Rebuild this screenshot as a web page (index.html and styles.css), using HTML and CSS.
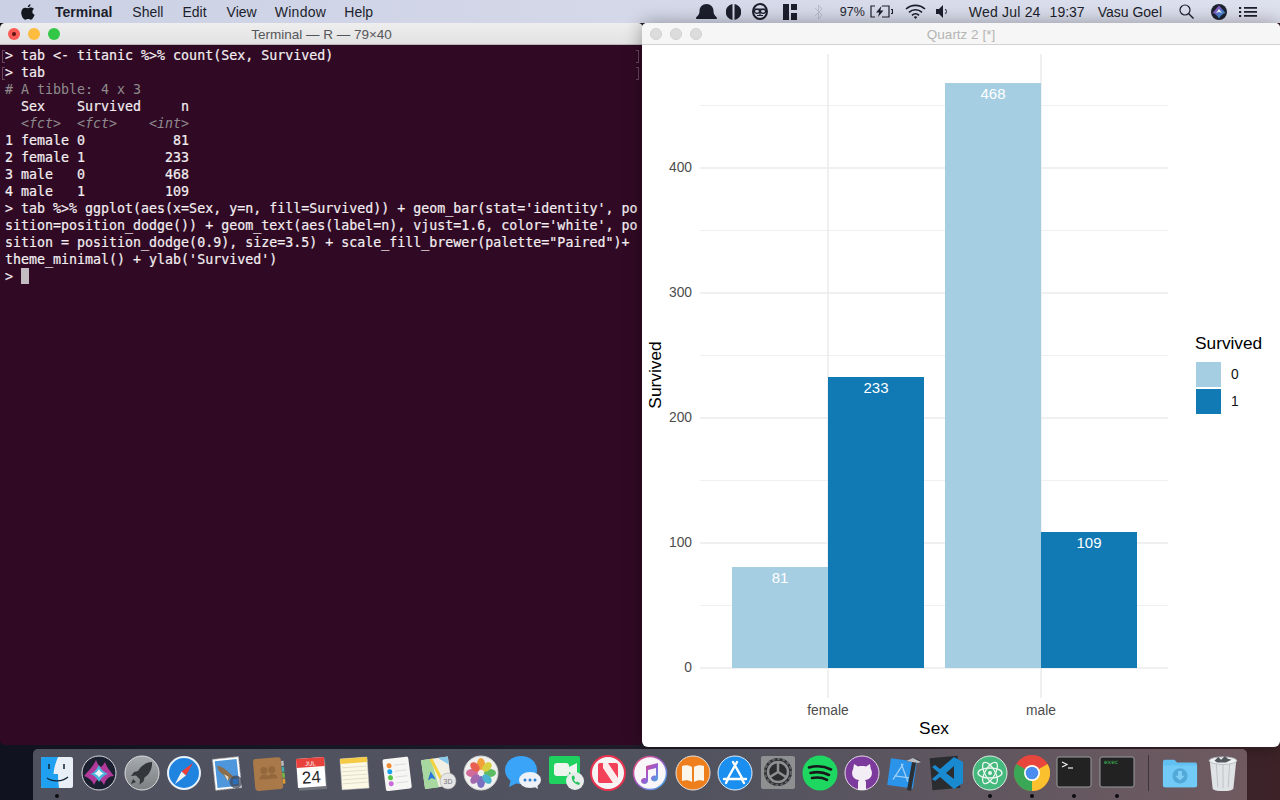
FILE: index.html
```html
<!DOCTYPE html>
<html lang="en">
<head>
    <meta charset="UTF-8">
    <title>Terminal - Quartz 2</title>
    <link rel="stylesheet" href="styles.css">
</head>
<body>
<div class="menubar">
    <svg class="apple" viewBox="0 0 14 16"><path d="M9.6 0.2c.1 1.2-1.1 3-2.8 3C6.600 1.800 8 .4 9.600.2zM7 4.200c.8 0 1.600-.7 3-.7 1.100 0 2.200.5 3 1.500-2.400 1.400-2 4.800.6 5.800-.6 1.700-2 4.900-3.700 4.900-1 0-1.400-.7-2.700-.7s-1.800.7-2.700.7C2.400 15.900.2 11.800.2 8.700c0-3.100 2-5 4-5 1.200 0 2.100.5 2.800.5z" fill="#15171f"/></svg>
    <span class="menu-name">Terminal</span>
    <span class="menu-item m-shell">Shell</span>
    <span class="menu-item m-edit">Edit</span>
    <span class="menu-item m-view">View</span>
    <span class="menu-item m-window">Window</span>
    <span class="menu-item m-help">Help</span>
    <div class="status">
        <svg class="st-bell" viewBox="0 0 21 15"><path d="M0 14c0-1.500 3.500-2 3.500-7 0-4 3-7 7-7s7 3 7 7c0 5 3.500 5.500 3.500 7 0 .6-.5 1-1 1H1c-.5 0-1-.4-1-1z" fill="#1c1f2c"/></svg>
        <svg class="st-half" viewBox="0 0 15 16"><path d="M6.500 0.100A8 8 0 0 0 6.500 15.900zM8.500 0.100A8 8 0 0 1 8.500 15.900z" fill="#1c1f2c"/></svg>
        <svg class="st-mask" viewBox="0 0 16 17"><ellipse cx="8" cy="8.500" rx="7" ry="7.500" fill="none" stroke="#1c1f2c" stroke-width="2"/><path d="M2 5.500h12v1.200H2z" fill="#1c1f2c"/><ellipse cx="5" cy="8.300" rx="2.600" ry="2" fill="none" stroke="#1c1f2c" stroke-width="1.300"/><ellipse cx="11" cy="8.300" rx="2.600" ry="2" fill="none" stroke="#1c1f2c" stroke-width="1.300"/><path d="M8 6v7M5 12.500h6" stroke="#1c1f2c" stroke-width="1.200"/></svg>
        <svg class="st-layout" viewBox="0 0 14 16"><path d="M0 0h6v16H0zM8 0h6v6H8zM8 9h6v7H8z" fill="#1c1f2c"/></svg>
        <svg class="st-bt" viewBox="0 0 9 16"><path d="M1 4l7 7-3.500 4V1L8 5l-7 7" fill="none" stroke="#b9bdcc" stroke-width="1"/></svg>
        <span class="st-text st-pct">97%</span>
        <svg class="st-batt" viewBox="0 0 23 13"><path d="M5 1H1v11h4M12 1h7v11h-7M21 4.500h1.500v4H21" fill="none" stroke="#1c1f2c" stroke-width="1.200"/><path d="M11.500 1L6 7.500h3.200L8 12l5.500-6.500h-3.200z" fill="#1c1f2c"/></svg>
        <svg class="st-wifi" viewBox="0 0 21 15"><path d="M1 5a14 14 0 0 1 19 0M4 8.300a9.500 9.500 0 0 1 13 0M7 11.300a5 5 0 0 1 7 0" fill="none" stroke="#1c1f2c" stroke-width="1.700"/><path d="M8.800 13a2.500 2.500 0 0 1 3.400 0l-1.700 2z" fill="#1c1f2c"/></svg>
        <svg class="st-vol" viewBox="0 0 12 13"><path d="M0 4h3l4-4v13l-4-4H0z" fill="#1c1f2c"/><path d="M9.500 4a4 4 0 0 1 0 5" fill="none" stroke="#1c1f2c"/></svg>
        <span class="st-text st-date">Wed Jul 24</span>
        <span class="st-text st-time">19:37</span>
        <span class="st-text st-user">Vasu Goel</span>
        <svg class="st-search" viewBox="0 0 15 15"><circle cx="6" cy="6" r="5" fill="none" stroke="#1c1f2c" stroke-width="1.200"/><path d="M9.500 9.500L14.500 14.500" stroke="#1c1f2c" stroke-width="1.400"/></svg>
        <svg class="st-siri" viewBox="0 0 16 16"><defs><linearGradient id="ss" x1="0" y1="0" x2="1" y2="1"><stop offset="0" stop-color="#c9409c"/><stop offset=".5" stop-color="#5b6fd0"/><stop offset="1" stop-color="#26b6c8"/></linearGradient></defs><circle cx="8" cy="8" r="8" fill="#1d2233"/><path d="M1.500 9C4 6 6 4 8 1.500 10 4 12 6 14.500 9 12 9.500 10 11 8 14.500 6 11 4 9.500 1.500 9z" fill="url(#ss)"/><path d="M5 9l3-4 3 4-3-1z" fill="#eef6fa"/></svg>
        <svg class="st-list" viewBox="0 0 18 12"><path d="M0 1h2.200v2H0zM0 5h2.200v2H0zM0 9h2.200v2H0zM5 1h13v1.800H5zM5 5h13v1.800H5zM5 9h13v1.800H5z" fill="#1c1f2c"/></svg>
    </div>
</div>

<div class="desktop">
    <div class="window term">
        <div class="titlebar term-title">
            <span class="light red"><i></i></span>
            <span class="light yellow"></span>
            <span class="light green"></span>
            <span class="title">Terminal — R — 79×40</span>
        </div>
        <pre class="console"><span class="mark">&gt; tab &lt;- titanic %&gt;% count(Sex, Survived)</span>
<span class="mark">&gt; tab</span>
<span class="dim"># A tibble: 4 x 3</span>
  Sex    Survived     n
<em>  &lt;fct&gt;  &lt;fct&gt;    &lt;int&gt;</em>
1 female 0           81
2 female 1          233
3 male   0          468
4 male   1          109
&gt; tab %&gt;% ggplot(aes(x=Sex, y=n, fill=Survived)) + geom_bar(stat='identity', po
sition=position_dodge()) + geom_text(aes(label=n), vjust=1.6, color='white', po
sition = position_dodge(0.9), size=3.5) + scale_fill_brewer(palette="Paired")+
theme_minimal() + ylab('Survived')
&gt; <span class="cursor"></span></pre>
    </div>

    <div class="window quartz">
        <div class="titlebar quartz-title">
            <span class="light off"></span>
            <span class="light off"></span>
            <span class="light off"></span>
            <span class="title">Quartz 2 [*]</span>
        </div>
        <svg class="plot" viewBox="642 45 638 702">
            <g class="grid-minor">
                <path d="M700 605.500H1168M700 480.500H1168M700 355.500H1168M700 230.500H1168M700 105.500H1168"/>
            </g>
            <g class="grid-major">
                <path d="M700 668H1168M700 543H1168M700 418H1168M700 293H1168M700 168H1168M828 54V698M1041 54V698"/>
            </g>
            <rect x="732" y="567" width="96" height="101" class="bar0"/>
            <rect x="828" y="377" width="96" height="291" class="bar1"/>
            <rect x="945" y="83" width="96" height="585" class="bar0"/>
            <rect x="1041" y="532" width="96" height="136" class="bar1"/>
            <g class="val">
                <text x="780" y="583">81</text>
                <text x="876" y="393">233</text>
                <text x="993" y="99">468</text>
                <text x="1089" y="548">109</text>
            </g>
            <g class="tick-y">
                <text x="692" y="672">0</text>
                <text x="692" y="547">100</text>
                <text x="692" y="422">200</text>
                <text x="692" y="297">300</text>
                <text x="692" y="172">400</text>
            </g>
            <g class="tick-x">
                <text x="828" y="715">female</text>
                <text x="1041" y="715">male</text>
            </g>
            <text class="axis-label" x="934" y="734">Sex</text>
            <text class="axis-label" transform="translate(661 375) rotate(-90)">Survived</text>
            <text class="legend-title" x="1195" y="349">Survived</text>
            <rect x="1196" y="362" width="25" height="25" class="bar0"/>
            <rect x="1196" y="389" width="25" height="25" class="bar1"/>
            <text class="legend-text" x="1231" y="379">0</text>
            <text class="legend-text" x="1231" y="406">1</text>
        </svg>
    </div>
</div>

<div class="dock">
    <div class="dock-item on"><svg viewBox="0 0 36 36"><rect x="2" y="2" width="32" height="31" rx="2" fill="#e8eff6"/><path d="M2 4a2 2 0 0 1 2-2h15c-3 7-4 12-4.500 17H19c0 5 .5 10 1 14H4a2 2 0 0 1-2-2z" fill="#1fa0f0"/><path d="M10 9v5M25 9v5" stroke="#123" stroke-width="1.500"/><path d="M8 23c5 4 15 4 21-1" fill="none" stroke="#123" stroke-width="1.200"/></svg></div>
    <div class="dock-item"><svg viewBox="0 0 36 36"><circle cx="18" cy="18" r="17" fill="#1b2030" stroke="#d8d8de"/><path d="M3 21C8 15 12 12 15 5c2 5 3 6 5 7 2-2 3-3 4-5 2 6 6 10 9 14-5 0-8 3-10 9-2-4-4-5-6-6-2 2-3 4-4 6-2-5-5-7-10-9z" fill="#b0399a"/><path d="M9 19c4-1 6-4 9-9 2 5 5 7 9 9-4 1-7 4-9 8-2-4-5-7-9-8z" fill="#4ab4dc"/><path d="M13 18.500c2-.5 3.500-2 5-4.500 1 2.500 3 4 5 4.500-2 .5-4 2-5 4-1-2-3-3.500-5-4z" fill="#eef6fa"/></svg></div>
    <div class="dock-item"><svg viewBox="0 0 36 36"><defs><linearGradient id="lp" x1="0" y1="0" x2="0" y2="1"><stop offset="0" stop-color="#a6abb0"/><stop offset="1" stop-color="#7c8082"/></linearGradient></defs><circle cx="18" cy="18" r="17" fill="url(#lp)" stroke="#dcdcdc"/><path d="M28 7c-6 0-11 4-14 9l-4 1-3 4 5-.5 4 4-.5 5 4-3 1-4c5-3 8-9 7.500-15.500z" fill="#33363b"/><path d="M9 24l-2 5 5-2z" fill="#33363b"/></svg></div>
    <div class="dock-item"><svg viewBox="0 0 36 36"><circle cx="18" cy="18" r="17" fill="#e9f2fb"/><circle cx="18" cy="18" r="15" fill="#1f84e0"/><path d="M27 8L15.500 16.500 20 20.500z" fill="#ee3e3a"/><path d="M9 29l11-8.500-4.500-4z" fill="#f1f1f1"/></svg></div>
    <div class="dock-item"><svg viewBox="0 0 36 36"><g transform="rotate(-6 18 18)"><rect x="5" y="3" width="26" height="31" fill="#fff" stroke="#bbb" stroke-dasharray="2 1"/><rect x="7" y="5" width="22" height="27" fill="#4e97dc"/><path d="M9 10c5 1 8 4 11 8l6 6-5-1-3 3-4-7c-3-2-5-5-5-9z" fill="#8a6d4c"/><path d="M15 19l4 3-1 4z" fill="#e8e0cf"/></g><circle cx="27" cy="27" r="6.500" fill="#3d4050" opacity=".7"/><rect x="24" y="24" width="5" height="5" fill="#2a6fb8"/></svg></div>
    <div class="dock-item"><svg viewBox="0 0 36 36"><g transform="rotate(-5 18 18)"><rect x="3" y="3" width="28" height="32" rx="3" fill="#a9794a"/><rect x="31" y="7" width="2.500" height="5" fill="#bbb"/><rect x="31" y="13" width="2.500" height="5" fill="#4aa"/><rect x="31" y="19" width="2.500" height="5" fill="#7b4"/><rect x="31" y="25" width="2.500" height="5" fill="#d93"/><circle cx="13" cy="15" r="3.500" fill="#94683c"/><circle cx="21" cy="15" r="3.500" fill="#94683c"/><path d="M8 24c0-4 3-5 5-5s5 1 5 5zM17 24c0-4 2-5 4-5s5 1 5 5z" fill="#94683c"/></g></svg></div>
    <div class="dock-item"><svg viewBox="0 0 36 36"><g transform="rotate(-4 18 18)"><rect x="5" y="4" width="28" height="31" fill="#6f7278"/><rect x="4" y="3" width="28" height="29" fill="#fff"/><rect x="4" y="3" width="28" height="9" fill="#e8413c"/><text x="18" y="10.500" class="cal-month">JUL</text><text x="18" y="28" class="cal-day">24</text></g></svg></div>
    <div class="dock-item"><svg viewBox="0 0 36 36"><g transform="rotate(-4 18 18)"><rect x="5" y="3" width="27" height="31" fill="#fbf8e6" stroke="#ccc" stroke-width=".5"/><rect x="5" y="3" width="27" height="5" fill="#f5cb45"/><path d="M6 12H31M6 16H31M6 20H31M6 24H31M6 28H31" stroke="#d8d4bd" stroke-width=".7"/></g></svg></div>
    <div class="dock-item"><svg viewBox="0 0 36 36"><g transform="rotate(-7 18 18)"><rect x="6" y="3" width="26" height="32" rx="2" fill="#f6f6f4"/><circle cx="12" cy="10" r="2.500" fill="#f08a32"/><circle cx="12" cy="16" r="2.500" fill="#1aa3ef"/><circle cx="12" cy="22" r="2.500" fill="#55c440"/><circle cx="12" cy="28" r="2.500" fill="#c86dd8"/><path d="M17 10H29M17 16H29M17 22H29M17 28H29" stroke="#ddd"/></g></svg></div>
    <div class="dock-item"><svg viewBox="0 0 36 36"><g transform="rotate(-8 18 18)"><rect x="2" y="3" width="27" height="29" fill="#f2f0e4"/><path d="M2 3h10l4 29H2z" fill="#a6d8a0"/><path d="M12 3l10 29" stroke="#f3d23e" stroke-width="3"/><path d="M19 3h10v8z" fill="#88c9ec"/><path d="M10 15l4 9-4-2-4 2z" fill="#2a74d8"/></g><circle cx="27" cy="26" r="8" fill="#e6e6e6" stroke="#aaa" stroke-width=".6"/><text x="27" y="28.500" class="map-3d">3D</text></svg></div>
    <div class="dock-item"><svg viewBox="0 0 36 36"><circle cx="18" cy="18" r="17" fill="#f0f0ee" stroke="#d0d0d0"/><ellipse cx="18" cy="9" rx="4" ry="6" fill="#f2a23a"/><ellipse cx="18" cy="27" rx="4" ry="6" fill="#7a6fc0"/><ellipse cx="9" cy="18" rx="6" ry="4" fill="#d06a9a"/><ellipse cx="27" cy="18" rx="6" ry="4" fill="#5dbb63"/><ellipse cx="12" cy="12" rx="5.500" ry="3.800" transform="rotate(45 12 12)" fill="#e8604f"/><ellipse cx="24" cy="12" rx="5.500" ry="3.800" transform="rotate(-45 24 12)" fill="#d8d040"/><ellipse cx="12" cy="24" rx="5.500" ry="3.800" transform="rotate(-45 12 24)" fill="#a269ae"/><ellipse cx="24" cy="24" rx="5.500" ry="3.800" transform="rotate(45 24 24)" fill="#4bb3cf"/></svg></div>
    <div class="dock-item"><svg viewBox="0 0 36 36"><ellipse cx="16" cy="15" rx="16" ry="14" fill="#3aa4f8"/><path d="M6 24l-2 8 8-4z" fill="#3aa4f8"/><ellipse cx="25" cy="25" rx="11" ry="8" fill="#eef2f6"/><path d="M28 31l5 3-1-5z" fill="#eef2f6"/><circle cx="20" cy="25" r="1.500" fill="#2f7fd0"/><circle cx="25" cy="25" r="1.500" fill="#2f7fd0"/><circle cx="30" cy="25" r="1.500" fill="#2f7fd0"/></svg></div>
    <div class="dock-item"><svg viewBox="0 0 36 36"><rect x="1" y="1" width="31" height="28" rx="2" fill="#1fd15e"/><rect x="6" y="8" width="15" height="13" rx="3" fill="#eef5ee"/><path d="M21 12l8-4v13l-8-4z" fill="#eef5ee"/><circle cx="27" cy="26" r="9" fill="#e8ecea"/><path d="M24 21c-1 4 2 8 7 9l1-2-3-1.500-1 1c-1-1-2-2-2-3l1-1-1-3z" fill="#27c25a"/></svg></div>
    <div class="dock-item"><svg viewBox="0 0 36 36"><circle cx="18" cy="18" r="17" fill="#f5f5f5" stroke="#e8334f" stroke-width="2"/><rect x="8" y="8" width="20" height="20" rx="2" fill="#f34159"/><path d="M13 8h5l10 15v5h-5L13 13z" fill="#fdecee"/></svg></div>
    <div class="dock-item"><svg viewBox="0 0 36 36"><defs><linearGradient id="mu" x1="0" y1="0" x2="1" y2="1"><stop offset="0" stop-color="#f04a6a"/><stop offset=".5" stop-color="#9b59d0"/><stop offset="1" stop-color="#3bb6e8"/></linearGradient></defs><circle cx="18" cy="18" r="16.500" fill="#f8f6f8" stroke="url(#mu)" stroke-width="1.500"/><path d="M14 11l12-3v15.500a3.500 3 0 1 1-2-2.800V13l-8 2v11a3.500 3 0 1 1-2-2.800z" fill="url(#mu)"/></svg></div>
    <div class="dock-item"><svg viewBox="0 0 36 36"><circle cx="18" cy="18" r="17" fill="#ee7f1c" stroke="#e4e4e4"/><path d="M17 12c-3-2-7-2-10-1v15c3-1 7-1 10 1zM19 12c3-2 7-2 10-1v15c-3-1-7-1-10 1z" fill="#fbf6ec"/></svg></div>
    <div class="dock-item"><svg viewBox="0 0 36 36"><circle cx="18" cy="18" r="17" fill="#1a8ff0" stroke="#e4eef8"/><path d="M20 7L11 23M16 7l9 16M7 24h22M9 28l2-4M27 28l-3-5" stroke="#fff" stroke-width="2.400" stroke-linecap="round" fill="none"/></svg></div>
    <div class="dock-item"><svg viewBox="0 0 36 36"><rect x="1" y="1" width="34" height="33" rx="2" fill="#8d8f90"/><circle cx="18" cy="17" r="14" fill="#2c2d2f"/><circle cx="18" cy="17" r="10" fill="none" stroke="#8f9092" stroke-width="2.500"/><path d="M18 17v-9M18 17l8 5M18 17l-8 5" stroke="#8f9092" stroke-width="2.500"/><circle cx="18" cy="17" r="13" fill="none" stroke="#606164" stroke-width="2" stroke-dasharray="3 2"/></svg></div>
    <div class="dock-item"><svg viewBox="0 0 36 36"><circle cx="18" cy="18" r="17.500" fill="#1ed760"/><path d="M7 12.500c7-2 15-1.500 22 2M8.500 18c6-1.500 13-1 18.500 2M10 23c5-1 10-.8 15 1.800" fill="none" stroke="#17191a" stroke-width="2.600" stroke-linecap="round"/></svg></div>
    <div class="dock-item"><svg viewBox="0 0 36 36"><circle cx="18" cy="18" r="17" fill="#7b3a9c" stroke="#e4dbe8"/><path d="M10 9l4 2.500c2.500-.6 5.500-.6 8 0L26 9l.8 5c1.500 2 1.500 6 0 8-1.300 2-3.800 2.800-5.800 3l1 2v8h-8v-8l1-2c-2-.2-4.500-1-5.800-3-1.500-2-1.500-6 0-8z" fill="#f3eef5"/></svg></div>
    <div class="dock-item"><svg viewBox="0 0 36 36"><g transform="rotate(8 16 18)"><rect x="2" y="5" width="26" height="27" fill="#2a93ea"/><path d="M15 9L7 26M13 9l9 17M8 22h15" stroke="#9cd0f8" stroke-width="1.300" fill="none"/></g><path d="M34 6l-7-3-8 3 6 1-5 28 4 1 5-28z" fill="#2d2f33"/><path d="M19 6l7-3 8 4-3 1z" fill="#b9bcc0"/></svg></div>
    <div class="dock-item"><svg viewBox="0 0 36 36"><rect x="2" y="2" width="28" height="32" fill="#2a2c30" transform="rotate(-5 16 18)"/><path d="M25 2l9 5v21l-9 6-14-12-5 4-3-2 7-6-7-6 3-2 5 4zM25 11l-8 7 8 6z" fill="#1a8ad0"/></svg></div>
    <div class="dock-item on"><svg viewBox="0 0 36 36"><circle cx="18" cy="18" r="17" fill="#45b87e" stroke="#dcefe4"/><g fill="none" stroke="#e9f7ef" stroke-width="1.300"><ellipse cx="18" cy="18" rx="12" ry="5"/><ellipse cx="18" cy="18" rx="12" ry="5" transform="rotate(60 18 18)"/><ellipse cx="18" cy="18" rx="12" ry="5" transform="rotate(120 18 18)"/></g><circle cx="18" cy="18" r="2" fill="#e9f7ef"/></svg></div>
    <div class="dock-item on"><svg viewBox="0 0 36 36"><circle cx="18" cy="18" r="18" fill="#e8453c"/><path d="M18 18L33.600 9A18 18 0 0 1 18 36z" fill="#fbc02d"/><path d="M18 18L18 36A18 18 0 0 1 2.400 9z" fill="#3aa757"/><circle cx="18" cy="18" r="8" fill="#fff"/><circle cx="18" cy="18" r="6.300" fill="#4a8cf0"/></svg></div>
    <div class="dock-item on"><svg viewBox="0 0 36 36"><rect x="1" y="2" width="34" height="30" rx="2" fill="#222" stroke="#9a9c9e"/><path d="M6 7l5 2.500-5 2.500" fill="none" stroke="#eee" stroke-width="1.200"/><path d="M12 13h5" stroke="#eee" stroke-width="1.200"/></svg></div>
    <div class="dock-item on"><svg viewBox="0 0 36 36"><rect x="1" y="2" width="34" height="30" rx="2" fill="#222" stroke="#9a9c9e"/><text x="5" y="9" class="exec">exec</text></svg></div>
    <div class="dock-sep"></div>
    <div class="dock-item"><svg viewBox="0 0 38 32"><path d="M1 4a2 2 0 0 1 2-2h10l3 3h19a2 2 0 0 1 2 2v22a2 2 0 0 1-2 2H3a2 2 0 0 1-2-2z" fill="#62c0f2"/><path d="M1 8h36v21a2 2 0 0 1-2 2H3a2 2 0 0 1-2-2z" fill="#72cbf7"/><circle cx="19" cy="19" r="8" fill="#52a9d8"/><path d="M17 14h4v5h3l-5 5-5-5h3z" fill="#7fcef5"/></svg></div>
    <div class="dock-item"><svg viewBox="0 0 32 38"><path d="M2 6l3 29c.2 2 5 3 11 3s10.800-1 11-3l3-29z" fill="#dfe3e6"/><path d="M9 9l1.500 25M16 9v26M23 9l-1.500 25" stroke="#bcc1c5"/><ellipse cx="16" cy="6" rx="14.500" ry="4" fill="#eef0f2" stroke="#b8bcc0"/><path d="M7 6l4-4 3 3 4-4 3 3 4 1-6 3H10z" fill="#50565c"/></svg></div>
</div>
</body>
</html>
```

FILE: styles.css
```css
*{
    padding:0;
    margin:0;
    box-sizing:border-box;
}
body{
    width:1280px;
    height:800px;
    overflow:hidden;
    display:flex;
    flex-direction:column;
    font-family:"Liberation Sans",Arial,sans-serif;
    background:linear-gradient(90deg,#10131f 0%,#1a1a28 40%,#3d2328 100%);
}

/* menu bar */
.menubar{
    height:23px;
    flex:none;
    display:flex;
    align-items:center;
    font-size:14px;
    color:#1c1f2c;
    background:linear-gradient(90deg,#cbd0e4,#dde0ed);
}
.apple{
    width:14px;
    height:16px;
    margin-left:21px;
}
.menu-name{
    font-weight:bold;
    margin-left:20px;
}
.m-shell{margin-left:20px;}
.m-edit{margin-left:19px;}
.m-view{margin-left:20px;}
.m-window{margin-left:18px;letter-spacing:.3px;}
.m-help{margin-left:18px;}
.status{
    margin-left:auto;
    padding-right:23px;
    display:flex;
    align-items:center;
}
.st-text{
    white-space:nowrap;
}
.st-bell{width:21px;height:15px;}
.st-half{width:15px;height:16px;margin-left:9px;}
.st-mask{width:16px;height:17px;margin-left:11px;}
.st-layout{width:14px;height:16px;margin-left:15px;}
.st-bt{width:9px;height:16px;margin-left:17px;}
.st-pct{font-size:12.500px;margin-left:17px;}
.st-batt{width:23px;height:13px;margin-left:5px;}
.st-wifi{width:21px;height:15px;margin-left:12px;}
.st-vol{width:12px;height:13px;margin-left:10px;}
.st-date{margin-left:21px;letter-spacing:.2px;}
.st-time{margin-left:9px;}
.st-user{margin-left:13px;}
.st-search{width:15px;height:15px;margin-left:17px;}
.st-siri{width:16px;height:16px;margin-left:17px;}
.st-list{width:18px;height:12px;margin-left:12px;}

/* windows sit on the desktop */
.desktop{
    position:relative;
    flex:1;
}
.window{
    position:absolute;
    top:0;
    overflow:hidden;
    display:flex;
    flex-direction:column;
}
.term{
    left:0;
    width:643px;
    height:722px;
    border-radius:5px;
    background:#300a24;
}
.quartz{
    left:642px;
    width:638px;
    height:724px;
    border-radius:5px 5px 6px 6px;
    background:#fff;
    box-shadow:0 0 18px rgba(0,0,0,0.35);
}
.titlebar{
    position:relative;
    height:22px;
    flex:none;
    display:flex;
    align-items:center;
    gap:8px;
    padding-left:8px;
    font-size:13.500px;
}
.term-title{
    background:linear-gradient(#eeeeee,#e2e2e2);
    border-bottom:1px solid #b8b8b8;
    color:#55565a;
}
.quartz-title{
    background:#f6f6f6;
    border-bottom:1px solid #d2d2d2;
    color:#b4b4b4;
}
.title{
    position:absolute;
    left:0;
    right:0;
    padding-top:1px;
    text-align:center;
}
.light{
    width:12px;
    height:12px;
    border-radius:50%;
    display:flex;
    align-items:center;
    justify-content:center;
    position:relative;
    z-index:1;
}
.light i{
    width:4px;
    height:4px;
    border-radius:50%;
    background:#5a1410;
}
.red{background:#fc5a55;}
.yellow{background:#fdbb3f;}
.green{background:#33c748;}
.off{background:#dcdcdc;border:1px solid #d0d0d0;}

/* terminal text */
.console{
    flex:1;
    padding:2px 0 0 5px;
    font-family:"DejaVu Sans Mono","Liberation Mono",monospace;
    font-size:13.300px;
    line-height:17px;
    color:#f3eef1;
    -webkit-text-stroke:0.2px #f3eef1;
}
.console em{
    color:#8f8a8e;
    font-style:italic;
    -webkit-text-stroke:0;
}
.dim{
    color:#8f8a8e;
    -webkit-text-stroke:0;
}
.mark{
    position:relative;
    display:inline-block;
    width:632px;
}
.mark::before,
.mark::after{
    content:"";
    position:absolute;
    top:3px;
    width:2px;
    height:11px;
    border:1px solid #6b4560;
}
.mark::before{
    left:-3px;
    border-right:none;
}
.mark::after{
    right:-2px;
    border-left:none;
}
.cursor{
    display:inline-block;
    width:8px;
    height:16px;
    background:#c2bcc0;
    vertical-align:-3px;
}

/* plot */
.plot{
    flex:1;
    width:638px;
    height:702px;
    display:block;
    font-family:"Liberation Sans",Arial,sans-serif;
}
.grid-minor path{
    fill:none;
    stroke:#f0f0f0;
    stroke-width:1;
}
.grid-major path{
    fill:none;
    stroke:#ebebeb;
    stroke-width:1.500;
}
.bar0{fill:#a6cee3;}
.bar1{fill:#1179b3;}
.val text{
    fill:#fff;
    font-size:15px;
    text-anchor:middle;
}
.tick-y text{
    fill:#4d4d4d;
    font-size:13.800px;
    text-anchor:end;
}
.tick-x text{
    fill:#4d4d4d;
    font-size:13.800px;
    text-anchor:middle;
}
.axis-label{
    fill:#000;
    font-size:17.300px;
    text-anchor:middle;
}
.legend-title{
    fill:#000;
    font-size:17.300px;
}
.legend-text{
    fill:#111;
    font-size:13.800px;
}

/* dock */
.dock{
    position:relative;
    flex:none;
    width:1214px;
    height:51px;
    margin-left:33px;
    padding:6px 0 0 2.800px;
    display:flex;
    align-items:flex-start;
    border-radius:5px 5px 0 0;
    background:linear-gradient(90deg,#4f515f 0%,#51535f 55%,#6f5a60 100%);
}
.dock-item{
    position:relative;
    width:42.400px;
    height:36px;
    flex:none;
    display:flex;
    align-items:center;
    justify-content:center;
}
.dock-item svg{
    width:36px;
    height:36px;
    display:block;
}
.dock-item.on::after{
    content:"";
    position:absolute;
    left:50%;
    bottom:-7px;
    width:4px;
    height:4px;
    margin-left:-2px;
    border-radius:50%;
    background:#0c0c10;
}
.dock-sep{
    width:1px;
    height:36px;
    margin:0 10px 0 10px;
    flex:none;
    background:#3c3436;
}
.cal-month{
    fill:#fff;
    font-size:6px;
    text-anchor:middle;
}
.cal-day{
    fill:#2a2a2a;
    font-size:17px;
    text-anchor:middle;
}
.map-3d{
    fill:#777;
    font-size:7px;
    text-anchor:middle;
}
.exec{
    fill:#3fbf5a;
    font-family:"DejaVu Sans Mono",monospace;
    font-size:6px;
}
```
